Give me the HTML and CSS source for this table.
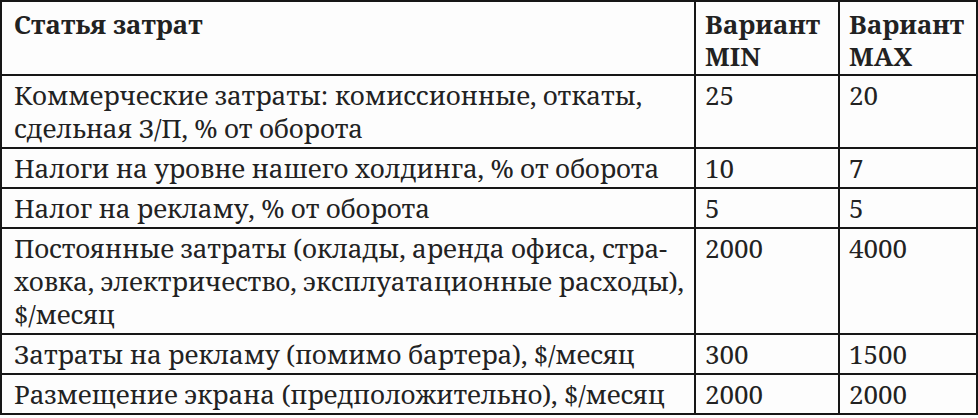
FILE: index.html
```html
<!DOCTYPE html>
<html lang="ru">
<head>
<meta charset="utf-8">
<link rel="stylesheet" href="styles.css">
</head>
<body>
<table class="costs">
  <colgroup>
    <col class="c-item">
    <col class="c-min">
    <col class="c-max">
  </colgroup>
  <thead>
    <tr>
      <th>Статья затрат</th>
      <th>Вариант MIN</th>
      <th>Вариант MAX</th>
    </tr>
  </thead>
  <tbody>
    <tr>
      <td>Коммерческие затраты: комиссионные, откаты,<br>сдельная З/П, % от оборота</td>
      <td>25</td>
      <td>20</td>
    </tr>
    <tr>
      <td>Налоги на уровне нашего холдинга, % от оборота</td>
      <td>10</td>
      <td>7</td>
    </tr>
    <tr>
      <td>Налог на рекламу, % от оборота</td>
      <td>5</td>
      <td>5</td>
    </tr>
    <tr>
      <td>Постоянные затраты (оклады, аренда офиса, стра-<br>ховка, электричество, эксплуатационные расходы),<br>$/месяц</td>
      <td>2000</td>
      <td>4000</td>
    </tr>
    <tr>
      <td>Затраты на рекламу (помимо бартера), $/месяц</td>
      <td>300</td>
      <td>1500</td>
    </tr>
    <tr>
      <td>Размещение экрана (предположительно), $/месяц</td>
      <td>2000</td>
      <td>2000</td>
    </tr>
  </tbody>
</table>
</body>
</html>
```

FILE: styles.css
```css
html, body {
  margin: 0;
  padding: 0;
  background: #fdfdfd;
}
.costs {
  border-collapse: collapse;
  width: 976px;
  table-layout: fixed;
  font-family: "Noto Serif", "DejaVu Serif", serif;
  font-size: 26px;
  line-height: 33px;
  color: #222;
}
.c-item { width: 694px; }
.c-min { width: 144px; }
.c-max { width: 138px; }
.costs th,
.costs td {
  border: 2px solid #161616;
  padding: 3px 8px 2px 12px;
  vertical-align: top;
  text-align: left;
}
.costs td:first-child {
  white-space: nowrap;
  letter-spacing: -0.2px;
}
.costs th {
  font-weight: bold;
  line-height: 32px;
  padding-top: 6px;
  padding-bottom: 2px;
}
.costs th + th,
.costs td + td {
  padding-left: 9px;
}
```
